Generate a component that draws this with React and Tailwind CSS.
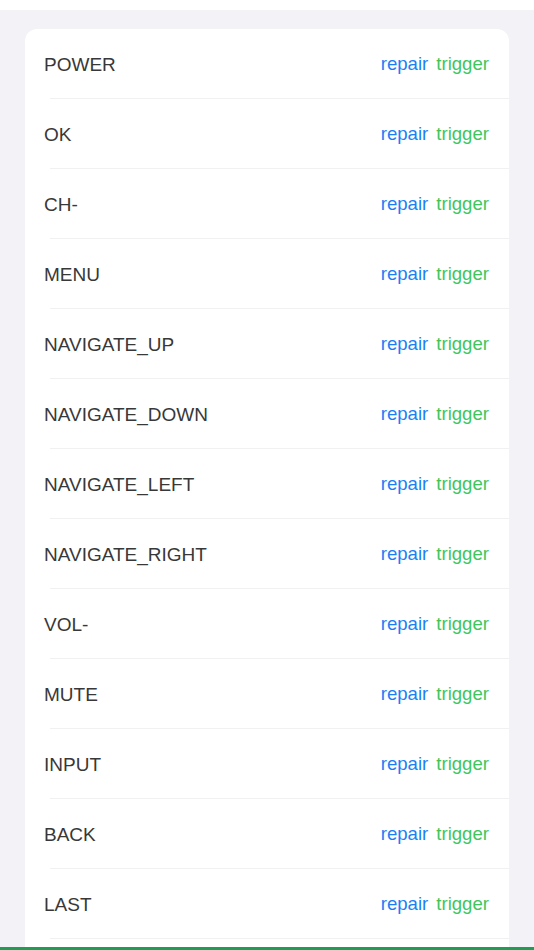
import React from "react";

const items = [
  "POWER",
  "OK",
  "CH-",
  "MENU",
  "NAVIGATE_UP",
  "NAVIGATE_DOWN",
  "NAVIGATE_LEFT",
  "NAVIGATE_RIGHT",
  "VOL-",
  "MUTE",
  "INPUT",
  "BACK",
  "LAST",
];

export default function App() {
  return (
    <div
      className="min-h-screen bg-[#f2f2f7]"
      style={{ fontFamily: '"Liberation Sans", Arial, sans-serif' }}
    >
      <div className="h-[10px] bg-white" />
      <div className="px-[25px] pt-[19px]">
        <div className="rounded-t-[12px] bg-white pb-[40px]">
          {items.map((name) => (
            <div key={name} className="pl-[25px]">
              <div className="flex h-[70px] items-center justify-between border-b border-[#f1f1f3] pr-[20px] pt-[4px]">
                <span className="-ml-[6px] text-[19px] text-[#383838]">{name}</span>
                <div className="mb-[4px] flex items-center gap-[8px] text-[18.6px]">
                  <span className="text-[#1a7ff6]">repair</span>
                  <span className="text-[#3ec65e]">trigger</span>
                </div>
              </div>
            </div>
          ))}
        </div>
      </div>
      <div className="fixed bottom-0 left-0 right-0 h-[3px] bg-[#1f9d55]" />
    </div>
  );
}
